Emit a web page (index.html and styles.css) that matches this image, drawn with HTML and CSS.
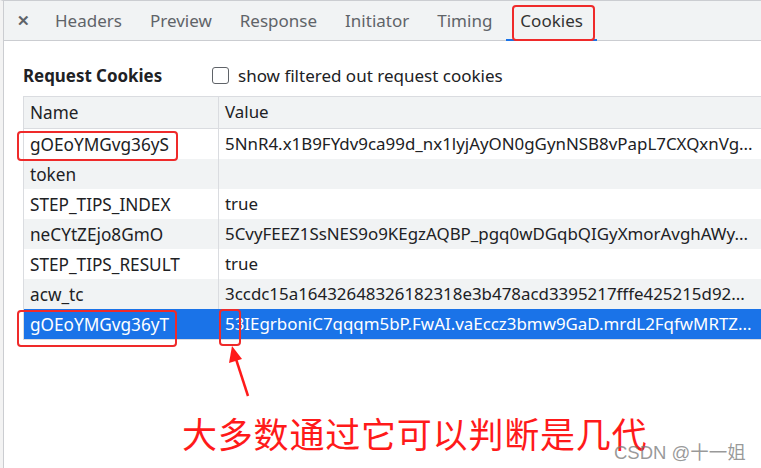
FILE: index.html
```html
<!DOCTYPE html>
<html>
<head>
<meta charset="utf-8">
<link rel="stylesheet" href="styles.css">
</head>
<body>
<div class="page">
  <div class="tabs">
    <div class="tab close">&#x2715;</div>
    <div class="tab">Headers</div>
    <div class="tab">Preview</div>
    <div class="tab">Response</div>
    <div class="tab">Initiator</div>
    <div class="tab">Timing</div>
    <div class="tab active">Cookies</div>
  </div>
  <div class="content">
    <div class="heading">
      <span class="title">Request Cookies</span>
      <label class="filter"><span class="checkbox"></span>show filtered out request cookies</label>
    </div>
    <div class="table">
      <div class="row head"><div class="c name">Name</div><div class="c value">Value</div></div>
      <div class="row"><div class="c name">gOEoYMGvg36yS</div><div class="c value">5NnR4.x1B9FYdv9ca99d_nx1lyjAyON0gGynNSB8vPapL7CXQxnVg...</div></div>
      <div class="row alt"><div class="c name">token</div><div class="c value"></div></div>
      <div class="row"><div class="c name">STEP_TIPS_INDEX</div><div class="c value">true</div></div>
      <div class="row alt"><div class="c name">neCYtZEjo8GmO</div><div class="c value">5CvyFEEZ1SsNES9o9KEgzAQBP_pgq0wDGqbQIGyXmorAvghAWy...</div></div>
      <div class="row"><div class="c name">STEP_TIPS_RESULT</div><div class="c value">true</div></div>
      <div class="row alt"><div class="c name">acw_tc</div><div class="c value">3ccdc15a16432648326182318e3b478acd3395217fffe425215d92...</div></div>
      <div class="row sel"><div class="c name">gOEoYMGvg36yT</div><div class="c value">53IEgrboniC7qqqm5bP.FwAI.vaEccz3bmw9GaD.mrdL2FqfwMRTZ...</div></div>
    </div>
  </div>

  <div class="mark m-tab"></div>
  <div class="mark m-row1"></div>
  <div class="mark m-row2"></div>
  <div class="mark m-char"></div>
  <svg class="arrow" width="40" height="60" viewBox="0 0 40 60">
    <line x1="28" y1="52" x2="15" y2="12" stroke="#ff1a1a" stroke-width="2.5"/>
    <polygon points="12,2 9,19 22,15" fill="#ff1a1a"/>
  </svg>
  <div class="note">大多数通过它可以判断是几代</div>
  <div class="watermark">CSDN @十一姐</div>
</div>
</body>
</html>
```
FILE: styles.css
```css
html, body {
  margin: 0;
  padding: 0;
  background: #fff;
}
body {
  font-family: "Noto Sans", "Open Sans", sans-serif;
  font-size: 17px;
  color: #202124;
  width: 761px;
  height: 468px;
  overflow: hidden;
}
.page {
  position: relative;
  height: 467px;
  border-left: 3px solid #f3f3f3;
  border-top: 1px solid #cbcdd1;
}
.page::before {
  content: "";
  position: absolute;
  left: 0;
  top: 0;
  bottom: 0;
  width: 1px;
  background: #cbcdd1;
}
.tabs {
  display: flex;
  height: 39px;
  background: #f1f3f4;
  border-bottom: 1px solid #cbcdd1;
  padding-left: 9px;
  align-items: stretch;
}
.tab {
  display: flex;
  align-items: center;
  padding: 0 14px;
  color: #5f6368;
  font-size: 17px;
  border-bottom: 2px solid transparent;
  margin-bottom: -1px;
}
.tab.close {
  padding: 0 11px 0 5px;
  font-size: 15px;
  font-weight: bold;
  color: #5f6368;
}
.tab.active {
  color: #333;
  border-bottom-color: #1a73e8;
}
.content {
  padding: 21px 0 0 20px;
}
.heading {
  display: flex;
  align-items: center;
  height: 26px;
}
.title {
  font-weight: bold;
  font-size: 16.9px;
  color: #202124;
  width: 189px;
}
.filter {
  display: flex;
  align-items: center;
  color: #202124;
  font-size: 17px;
}
.checkbox {
  width: 15px;
  height: 15px;
  border: 1.5px solid #5f6368;
  border-radius: 3px;
  margin-right: 9px;
}
.table {
  margin-top: 8px;
  width: 737px;
  font-size: 17.2px;
  border-top: 1px solid #dadce0;
  border-left: 1px solid #dadce0;
  border-bottom: 1px solid #dadce0;
  overflow: hidden;
}
.row {
  display: flex;
  height: 30px;
  align-items: stretch;
}
.row.head {
  background: #f1f3f4;
  height: 31px;
  border-bottom: 1px solid #dadce0;
}
.row.alt {
  background: #f1f3f4;
}
.row.sel {
  background: #1a73e8;
  color: #fff;
}
.c {
  display: flex;
  align-items: center;
  padding: 0 6px;
  white-space: nowrap;
  overflow: hidden;
}
.c.name {
  width: 182px;
  flex: none;
  border-right: 1px solid #dadce0;
}
.c.value {
  flex: 1;
  min-width: 0;
  display: block;
  line-height: 30px;
  font-size: 16.9px;
  text-overflow: ellipsis;
  padding-right: 0;
}
.row.sel .c.name {
  border-right-color: #1a73e8;
}
.mark {
  position: absolute;
  border: 2px solid #ef2a2a;
  border-radius: 4px;
  box-sizing: border-box;
}
.m-tab { left: 509px; top: 4px; width: 83px; height: 36px; }
.m-row1 { left: 14px; top: 130px; width: 161px; height: 30px; }
.m-row2 { left: 14px; top: 309px; width: 160px; height: 37px; }
.m-char { left: 216px; top: 308px; width: 22px; height: 37px; }
.arrow {
  position: absolute;
  left: 217px;
  top: 343px;
}
.note {
  position: absolute;
  left: 179px;
  top: 407px;
  font-family: "Noto Sans CJK SC", sans-serif;
  font-size: 35px;
  line-height: 50px;
  color: #ff1a1a;
  letter-spacing: 0.8px;
}
.watermark {
  position: absolute;
  left: 611px;
  top: 437px;
  font-family: "Liberation Sans", "Noto Sans CJK SC", sans-serif;
  font-size: 18.5px;
  color: rgba(120, 120, 120, 0.75);
}
```
